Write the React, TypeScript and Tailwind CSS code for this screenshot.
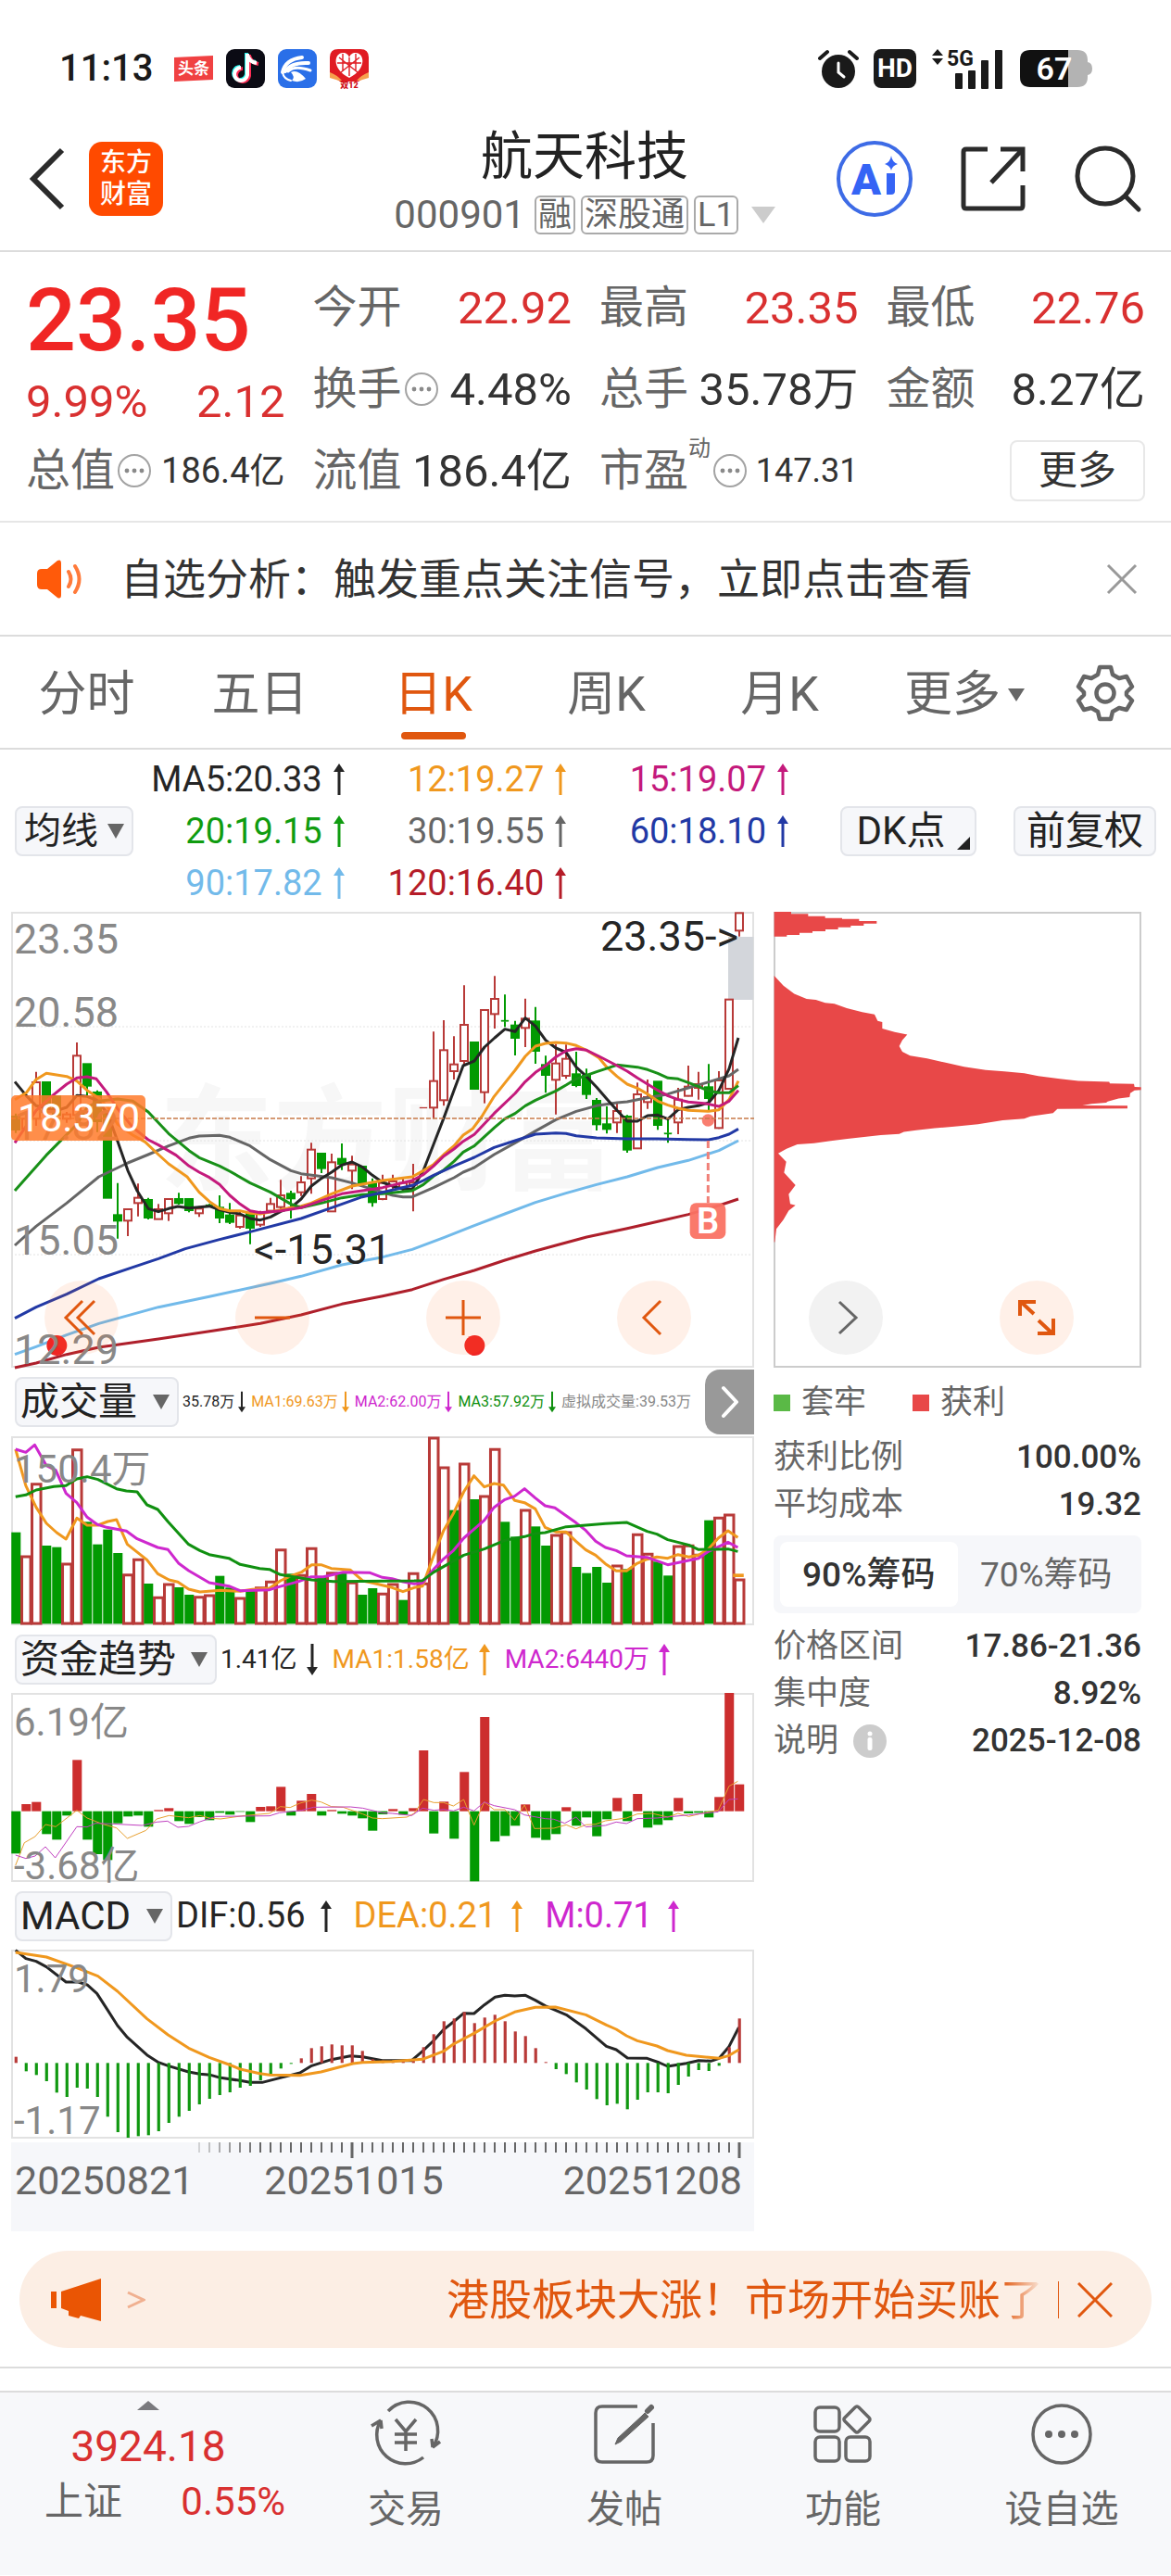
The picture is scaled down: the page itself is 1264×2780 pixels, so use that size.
import React from 'react';

type Tone = 'r' | 'g';
// [tone, high, body top, body bottom, low]
type Candle = [Tone, number, number, number, number];

const RED = '#b83a38';
const GREEN = '#029a02';

const candles: Candle[] = [
  ['g', 695, 705, 747, 758], ['r', 695, 712, 745, 755], ['r', 560, 594, 712, 735], ['g', 594, 594, 690, 690],
  ['g', 640, 640, 700, 700], ['r', 690, 698, 712, 725], ['r', 465, 508, 700, 700], ['g', 535, 535, 605, 640],
  ['g', 620, 627, 720, 755], ['g', 690, 690, 968, 968], ['g', 920, 1024, 1042, 1100], ['r', 1005, 1005, 1042, 1092],
  ['r', 922, 968, 985, 1028], ['g', 968, 975, 1032, 1038], ['r', 988, 1005, 1037, 1037], ['r', 972, 972, 1018, 1043],
  ['g', 952, 972, 985, 990], ['g', 972, 972, 1008, 1015], ['r', 995, 1003, 1018, 1030], ['g', 988, 990, 996, 998],
  ['g', 960, 1000, 1032, 1050], ['g', 985, 1025, 1046, 1053], ['r', 1010, 1025, 1062, 1068], ['g', 1010, 1018, 1065, 1118],
  ['r', 1010, 1018, 1055, 1062], ['r', 968, 988, 1010, 1015], ['r', 910, 960, 998, 1005], ['g', 945, 955, 970, 1035],
  ['r', 898, 918, 950, 962], ['r', 790, 812, 905, 955], ['g', 825, 825, 872, 888], ['r', 825, 853, 1012, 1012],
  ['g', 792, 842, 858, 878], ['r', 832, 860, 880, 940], ['g', 865, 867, 922, 930], ['g', 905, 922, 982, 997],
  ['r', 893, 920, 972, 976], ['r', 893, 915, 930, 945], ['r', 905, 920, 935, 945], ['r', 858, 918, 926, 1012],
  ['r', 675, 675, 677, 677], ['r', 430, 590, 676, 712], ['r', 393, 490, 652, 670], ['r', 445, 536, 558, 585],
  ['r', 280, 408, 525, 540], ['g', 465, 465, 615, 618], ['r', 360, 360, 626, 662], ['r', 250, 324, 373, 420],
  ['g', 310, 393, 397, 415], ['g', 395, 410, 450, 507], ['r', 323, 388, 418, 480], ['g', 350, 397, 492, 534],
  ['g', 508, 538, 570, 628], ['r', 470, 533, 586, 698], ['r', 472, 518, 573, 583], ['g', 495, 568, 603, 610],
  ['g', 550, 573, 632, 648], ['g', 645, 654, 730, 750], ['g', 672, 730, 745, 760], ['r', 663, 687, 724, 758],
  ['g', 700, 705, 812, 822], ['r', 595, 633, 808, 808], ['r', 585, 642, 658, 680], ['g', 592, 592, 732, 748],
  ['g', 712, 758, 762, 790], ['r', 612, 650, 724, 762], ['r', 540, 608, 638, 640], ['r', 560, 600, 612, 650],
  ['g', 535, 610, 645, 690], ['r', 558, 588, 742, 745], ['r', 326, 326, 615, 615], ['r', 46, 46, 103, 122],
];

const maLines = [
  { color: '#666666', points: '48,1122 117,1060 216,985 320,900 414,855 480,828 546,800 612,775 645,768 711,766 744,772 810,800 876,845 942,880 975,890 1074,903 1140,920 1206,940 1272,960 1305,965 1335,965 1404,935 1470,903 1500,885 1536,870 1600,828 1668,790 1734,752 1800,715 1866,688 1932,670 1998,660 2031,657 2064,650 2130,638 2163,632 2229,612 2295,593 2361,573 2391,552' },
  { color: '#252525', points: '48,592 85,637 117,670 183,686 216,675 249,637 282,640 320,655 350,700 381,785 414,880 444,945 480,1003 513,1013 546,1003 576,996 612,1001 678,995 711,1007 744,1015 777,1020 810,1035 843,1040 876,1030 909,1012 942,1000 975,972 1008,930 1041,905 1074,885 1107,862 1140,852 1173,868 1206,895 1239,918 1272,930 1305,940 1335,940 1371,880 1404,795 1437,710 1470,620 1500,540 1536,525 1569,480 1602,450 1635,422 1668,430 1701,386 1734,412 1767,458 1800,483 1833,497 1866,545 1899,575 1932,610 1965,648 1998,685 2031,720 2064,720 2097,702 2130,700 2163,713 2196,683 2229,675 2262,670 2295,660 2328,620 2361,550 2391,450' },
  { color: '#f0981e', points: '48,650 85,628 117,585 150,565 216,575 249,590 282,620 320,645 350,675 381,730 430,765 470,787 513,828 546,858 606,900 645,950 678,980 711,1003 744,1010 777,1010 810,1018 843,1020 909,1007 942,1000 975,995 1008,985 1074,955 1140,930 1239,912 1335,900 1371,880 1404,860 1437,828 1470,800 1500,765 1530,745 1560,705 1600,640 1640,590 1668,555 1701,510 1734,477 1767,468 1800,465 1833,467 1866,475 1899,490 1940,515 1965,545 1998,575 2031,600 2064,613 2097,632 2130,655 2163,668 2196,678 2229,685 2295,688 2328,683 2361,650 2391,590' },
  { color: '#189018', points: '48,945 150,830 249,730 282,675 320,655 381,648 430,655 480,690 546,760 612,815 645,838 711,865 744,882 810,920 876,950 942,988 975,1000 1041,985 1107,968 1173,958 1239,955 1335,945 1371,925 1404,898 1437,878 1470,850 1500,820 1536,800 1569,770 1602,740 1635,712 1668,695 1701,670 1734,652 1767,637 1800,622 1833,603 1866,583 1932,560 1998,538 2064,545 2097,553 2130,565 2163,580 2196,583 2229,595 2262,608 2295,622 2328,628 2361,628 2391,605' },
  { color: '#c41a7c', points: '48,790 85,735 117,685 170,637 216,600 249,580 282,576 312,583 345,625 381,680 430,740 480,780 513,797 570,830 612,865 645,885 678,902 711,925 744,960 777,988 810,1010 843,1016 909,1010 975,1000 1041,977 1107,955 1173,945 1239,935 1335,912 1371,893 1404,865 1437,833 1470,810 1500,785 1536,763 1600,695 1668,630 1701,592 1734,562 1767,540 1800,512 1833,492 1866,485 1899,490 1940,510 1998,540 2031,558 2064,580 2097,600 2130,620 2163,638 2196,650 2229,658 2280,662 2328,672 2361,655 2391,620' },
  { color: '#2239a5', points: '48,1358 117,1322 216,1280 320,1230 430,1193 513,1165 600,1133 711,1103 810,1078 975,1035 1074,1000 1173,965 1239,950 1335,928 1371,912 1404,895 1437,880 1470,865 1536,837 1600,805 1668,783 1734,762 1800,758 1833,760 1866,767 1932,774 2031,777 2130,777 2229,779 2295,780 2328,773 2361,762 2391,745' },
  { color: '#72baea', points: '48,1475 117,1450 216,1412 320,1375 513,1322 678,1288 876,1245 975,1222 1107,1185 1239,1160 1335,1135 1437,1097 1536,1058 1635,1020 1734,983 1833,953 1932,925 2031,900 2130,870 2229,847 2328,815 2391,783' },
  { color: '#ae1f2b', points: '48,1518 117,1503 216,1475 320,1452 513,1425 678,1400 843,1375 975,1347 1107,1312 1239,1286 1335,1265 1437,1232 1536,1203 1635,1170 1734,1140 1800,1122 1900,1095 2031,1067 2130,1045 2229,1022 2328,993 2391,972' },
];

const volumeBars =
  'g521 r597 r362 g564 g569 r621 r251 g487 g560 g512 g588 r656 r607 g687 r730 r687 g699 g723 r728 r723 g662 g700 r732 g710 r698 r679 r575 g655 r658 r571 g663 r650 g650 r682 g723 g702 r718 r687 g740 r652 r685 r213 r309 g449 r297 g414 r402 r250 g487 g535 r447 g502 g564 r528 r519 g633 g653 g633 g684 r627 g640 r526 r589 g616 g661 r564 r562 r592 g482 r472 r462 r672';

const volumeLines = [
  { color: '#f0981e', points: '32,252 53,370 74,440 95,492 116,522 135,543 157,475 178,498 200,498 220,486 238,480 260,560 300,610 322,655 345,675 363,682 385,705 408,714 450,709 490,712 515,706 550,702 572,678 594,662 615,650 636,626 655,626 676,638 715,643 740,678 760,685 800,700 822,713 845,700 862,695 885,595 905,515 925,460 946,390 967,338 988,374 1008,363 1027,368 1050,418 1070,425 1092,445 1112,505 1135,520 1155,520 1175,550 1195,578 1215,595 1235,623 1257,646 1278,646 1298,623 1320,608 1340,601 1362,605 1383,593 1405,601 1425,595 1445,575 1465,540 1485,516 1505,538' },
  { color: '#ce28ce', points: '32,252 53,262 71,238 95,305 114,320 135,395 157,425 178,472 198,495 218,505 258,517 280,542 322,570 343,577 365,622 385,645 427,684 467,695 490,710 550,707 570,697 610,680 635,665 660,665 700,650 755,652 780,667 800,671 820,680 845,688 862,685 885,640 905,607 925,580 946,540 988,482 1008,440 1030,415 1050,404 1070,380 1092,410 1112,435 1132,442 1175,490 1195,515 1215,550 1235,570 1257,580 1278,597 1320,602 1362,626 1425,605 1445,583 1465,568 1485,553 1505,570' },
  { color: '#109010', points: '32,406 53,400 74,384 110,373 135,370 157,348 178,341 200,350 238,380 258,387 280,390 300,432 322,447 343,487 385,560 408,580 427,593 467,605 490,625 530,638 550,641 572,658 594,664 636,675 680,680 845,678 862,677 885,650 946,595 988,575 1030,547 1070,535 1092,525 1112,522 1155,503 1195,498 1235,493 1278,489 1320,518 1340,527 1362,545 1405,562 1425,577 1485,575 1505,583' },
];

const fundBars =
  'g720 r560 r553 g657 g675 g597 r417 g675 g722 g741 g622 g600 g597 g633 r579 r573 g615 g624 g602 g612 g588 g594 g585 g618 r569 r567 r504 g597 r549 r527 g597 r579 g591 g597 g606 g646 g593 r576 g594 r573 r386 g655 r552 g672 r456 g810 r278 g681 g663 g630 r561 g669 g676 g657 r570 g630 g603 g664 g609 r540 g615 r527 g636 g627 g612 r540 g590 g588 g603 r537 r200 r496';

const fundLines = [
  { color: '#e8a030', points: '32,758 50,685 72,665 93,626 114,633 157,580 178,605 210,625 238,637 260,671 298,645 320,608 345,597 385,604 408,597 430,606 450,608 500,597 550,590 572,568 592,571 612,557 636,547 655,553 676,568 700,570 740,592 760,605 780,607 830,602 845,590 864,545 885,555 905,555 925,566 946,545 967,628 988,553 1008,578 1030,578 1050,612 1070,563 1090,639 1130,638 1155,627 1175,640 1195,627 1215,625 1235,614 1278,605 1300,592 1330,590 1362,602 1383,590 1405,600 1445,585 1465,580 1487,502 1505,486' },
  { color: '#c040c0', points: '32,725 53,736 72,728 93,698 113,734 157,633 178,634 195,622 230,624 290,629 320,618 342,615 363,635 385,632 408,617 440,600 550,598 570,588 615,580 640,570 715,569 740,573 780,588 800,590 840,597 862,573 885,580 905,577 925,582 946,570 967,582 988,553 1008,565 1050,578 1070,595 1112,607 1130,609 1152,622 1175,602 1195,634 1235,629 1257,618 1278,623 1300,607 1340,605 1405,595 1465,585 1487,545 1505,543' },
];

const macdBars =
  'r538 g585 g597 g617 g654 g668 g638 g641 g668 g732 g782 g800 g795 g792 g779 g752 g732 g713 g692 g674 g662 g653 g638 g632 g614 g595 g576 g561 r543 r510 r504 r498 r501 r501 r519 r546 r550 r553 r553 r548 r507 r465 r423 r414 r393 r429 r411 r402 r423 r456 r471 r510 r555 g578 g594 g621 g644 g675 g695 g690 g708 g677 g653 g653 g656 g629 g602 g581 g584 g567 r507 r414';

const macdLines = [
  { color: '#252525', points: '32,193 53,220 74,229 95,247 135,296 160,296 178,305 198,333 220,387 240,437 260,475 300,532 322,555 343,567 385,587 408,594 430,597 450,606 490,615 510,621 535,621 572,606 612,590 636,567 676,547 715,535 740,538 780,550 840,550 862,520 885,485 905,450 925,425 946,397 967,398 988,370 1010,345 1030,339 1050,341 1072,339 1092,355 1112,373 1155,402 1195,447 1237,504 1257,515 1280,542 1320,543 1345,557 1362,569 1400,559 1425,550 1450,552 1467,543 1487,505 1507,443' },
  { color: '#f0981e', points: '32,200 95,215 157,250 200,277 240,326 300,415 343,467 385,510 427,540 467,563 490,578 530,592 550,597 612,598 655,587 720,560 740,556 800,553 862,546 905,520 925,497 967,462 1010,422 1050,393 1092,378 1133,377 1195,402 1237,435 1257,449 1278,470 1300,486 1340,503 1362,518 1400,533 1425,537 1467,543 1487,534 1507,515' },
];

const parseBars = (text: string) =>
  text.split(' ').map((item, i) => ({ up: item[0] === 'r', y: Number(item.slice(1)), x: 33 + 20.78 * i }));

const averages = [
  { label: 'MA5:20.33', tone: 'text-[#252525]' },
  { label: '12:19.27', tone: 'text-[#f0981e]' },
  { label: '15:19.07', tone: 'text-[#c41a7c]' },
  { label: '20:19.15', tone: 'text-[#109c10]' },
  { label: '30:19.55', tone: 'text-[#666666]' },
  { label: '60:18.10', tone: 'text-[#2239a5]' },
  { label: '90:17.82', tone: 'text-[#72baea]' },
  { label: '120:16.40', tone: 'text-[#b51c28]' },
];

const ArrowIcon = ({ down = false, small = false }: { down?: boolean; small?: boolean }) => (
  <svg viewBox="0 0 12 36" className={`${small ? 'h-6 w-2' : 'h-9 w-3'} shrink-0 ${down ? 'rotate-180' : ''}`} aria-hidden="true">
    <path d="M6 1 L12 10 H0 Z" fill="currentColor" />
    <path d="M6 8 V35" stroke="currentColor" strokeWidth="3" />
  </svg>
);

const MoreDots = () => (
  <svg viewBox="0 0 38 38" className="ml-[2px] size-[38px] shrink-0" aria-hidden="true">
    <circle cx="19" cy="19" r="17" fill="none" stroke="#a3a3a3" strokeWidth="2" />
    <g fill="#8a8a8a">
      <circle cx="11" cy="19" r="2.4" />
      <circle cx="19" cy="19" r="2.4" />
      <circle cx="27" cy="19" r="2.4" />
    </g>
  </svg>
);

const Lines = ({ lines, width }: { lines: { color: string; points: string }[]; width: number }) => (
  <>
    {lines.map((line) => (
      <polyline
        key={line.color}
        points={line.points}
        fill="none"
        stroke={line.color}
        strokeWidth={width}
        strokeLinejoin="round"
        vectorEffect="non-scaling-stroke"
      />
    ))}
  </>
);

const StatusBar = () => (
  <div className="flex h-[124px] items-center justify-between pt-6 pr-[85px] pl-16 text-[#1a1a1a]">
    <div className="flex items-center gap-3">
      <span className="mr-[10px] text-[40px] leading-none font-medium">11:13</span>
      <svg viewBox="0 0 44 44" className="size-11" aria-hidden="true">
        <path d="M1 10 L43 8 V34 L1 36 Z" fill="#f04142" />
        <text x="22" y="28" textAnchor="middle" fontSize="17" fontWeight="700" fill="#fff">头条</text>
      </svg>
      <svg viewBox="0 0 44 44" className="size-11" aria-hidden="true">
        <rect x="1" y="1" width="42" height="42" rx="9" fill="#0b0b14" />
        <g fill="none" strokeWidth="4">
          <path d="M24 6 V29 A7 7 0 1 1 17 21 M24 7 Q26 15 34 16" stroke="#25f4ee" transform="translate(-1 -1)" />
          <path d="M24 6 V29 A7 7 0 1 1 17 21 M24 7 Q26 15 34 16" stroke="#fe2c55" transform="translate(2 1)" />
          <path d="M24 6 V29 A7 7 0 1 1 17 21 M24 7 Q26 15 34 16" stroke="#fff" />
        </g>
      </svg>
      <svg viewBox="0 0 44 44" className="size-11" aria-hidden="true">
        <rect x="1" y="1" width="42" height="42" rx="9" fill="#2a6fe8" />
        <g fill="none" stroke="#fff" strokeLinecap="round">
          <path d="M6 26 Q9 12 27 10" strokeWidth="4" />
          <path d="M9 25 Q15 15 34 16" strokeWidth="4" />
          <path d="M12 25 Q19 18 36 24" strokeWidth="3" />
          <path d="M6 26 Q7 33 15 35" strokeWidth="2" />
        </g>
        <path d="M15 26 Q22 22 31 33 Q24 38 16 35 Q20 31 15 26 Z" fill="#fff" />
      </svg>
      <svg viewBox="0 0 44 44" className="size-11" aria-hidden="true">
        <path d="M10 1 H34 Q43 1 43 10 V28 L32 36 H12 L1 28 V10 Q1 1 10 1 Z" fill="#e01b22" />
        <path d="M1 26 Q9 29 14 35 H30 Q35 29 43 26 V32 L33 35 H11 L1 32 Z" fill="#f6a04d" />
        <path d="M22 32 C2 22 6 5 15 5 C19 5 21 7 22 10 C23 7 25 5 29 5 C38 5 42 22 22 32 Z" fill="#fff" />
        <path d="M11 10 L31 26 M33 10 L13 26 M22 10 V30 M9 16 H35 M15 6 V24 M29 6 V24" stroke="#e01b22" strokeWidth="1.4" />
        <text x="22" y="43" textAnchor="middle" fontSize="9" fontWeight="900" fill="#d01018">双12</text>
      </svg>
    </div>
    <div className="flex items-center gap-4">
      <svg viewBox="0 0 44 44" className="size-11" aria-hidden="true">
        <circle cx="22" cy="25" r="18" fill="#1a1a1a" />
        <path d="M2 11 L10 4 M42 11 L34 4" stroke="#1a1a1a" strokeWidth="4" strokeLinecap="round" />
        <path d="M22 16 V26 L28 31" fill="none" stroke="#fff" strokeWidth="3" strokeLinecap="round" />
      </svg>
      <span className="flex h-[42px] w-[46px] items-center justify-center rounded-lg bg-[#1a1a1a] text-[28px] leading-none font-bold text-white">HD</span>
      <svg viewBox="0 0 80 46" className="h-[46px] w-20" aria-hidden="true">
        <path d="M7 2 L13 9 H1 Z M7 19 L13 12 H1 Z" fill="#1a1a1a" />
        <text x="17" y="20" fontSize="23" fontWeight="700" fill="#1a1a1a">5G</text>
        <g fill="#1a1a1a">
          <rect x="26" y="28" width="8" height="17" rx="1" />
          <rect x="40" y="25" width="8" height="20" rx="1" />
          <rect x="54" y="14" width="8" height="31" rx="1" />
          <rect x="69" y="3" width="8" height="42" rx="1" />
        </g>
      </svg>
      <svg viewBox="0 0 78 42" className="h-[42px] w-[78px]" aria-hidden="true">
        <path d="M10 1 H62 Q73 1 73 12 V14 Q78 15 78 21 Q78 27 73 28 V30 Q73 41 62 41 H10 Z" fill="#b3b3b3" />
        <path d="M11 1 H52 V41 H11 Q0 41 0 30 V12 Q0 1 11 1 Z" fill="#111" />
        <text x="37" y="33" textAnchor="middle" fontSize="34" fontWeight="600" fill="#fff">67</text>
      </svg>
    </div>
  </div>
);

const Header = () => (
  <header className="grid h-[148px] grid-cols-[1fr_auto_1fr] items-center border-b-2 border-[#dcdcdc] pr-[30px] pb-2 pl-7">
    <div className="flex items-center gap-6">
      <button type="button" aria-label="返回">
        <svg viewBox="0 0 44 72" className="h-[72px] w-11" fill="none" stroke="#2b2b2b" strokeWidth="6">
          <path d="M39 5 L8 36 L39 67" />
        </svg>
      </button>
      <div className="flex size-20 flex-col items-center justify-center rounded-[14px] bg-[#ff4a00] text-[28px] leading-[34px] font-medium text-white">
        <span>东方</span>
        <span>财富</span>
      </div>
    </div>
    <div className="flex flex-col items-center gap-[10px] pt-1">
      <h1 className="text-[56px] leading-[64px] text-[#222]">航天科技</h1>
      <button type="button" className="flex items-center gap-[6px] text-[#666]">
        <span className="mr-1 text-[42px] leading-[42px]">000901</span>
        <span className="rounded-md border-2 border-[#aaa] px-[2px] text-[36px] leading-[38px]">融</span>
        <span className="rounded-md border-2 border-[#aaa] px-[2px] text-[36px] leading-[38px]">深股通</span>
        <span className="rounded-md border-2 border-[#aaa] px-[2px] text-[36px] leading-[38px]">L1</span>
        <svg viewBox="0 0 26 18" className="ml-2 h-[18px] w-[26px]" aria-hidden="true">
          <path d="M0 0 H26 L13 18 Z" fill="#ccc" />
        </svg>
      </button>
    </div>
    <div className="flex items-center justify-end gap-12">
      <button type="button" aria-label="AI 助手">
        <svg viewBox="0 0 84 84" className="size-[84px]">
          <circle cx="42" cy="42" r="39" fill="none" stroke="#3d6be6" strokeWidth="4" />
          <text x="17" y="59" fontSize="47" fontWeight="900" fill="#3564f5">A</text>
          <path d="M55 36 H64 V55 Q64 59 60 59 H55 Z" fill="#3564f5" />
          <path d="M60 17 Q61 24 67 26 Q61 28 60 33 Q59 28 53 26 Q59 24 60 17 Z" fill="#3564f5" />
        </svg>
      </button>
      <button type="button" aria-label="分享">
        <svg viewBox="0 0 76 76" className="size-[76px]" fill="none" stroke="#2b2b2b" strokeWidth="5">
          <path d="M32 6 H9 Q6 6 6 9 V67 Q6 70 9 70 H67 Q70 70 70 67 V45" />
          <path d="M46 6 H70 V30 M70 6 L36 42" />
        </svg>
      </button>
      <button type="button" aria-label="搜索">
        <svg viewBox="0 0 76 76" className="size-[76px]" fill="none" stroke="#2b2b2b" strokeWidth="5">
          <circle cx="35" cy="35" r="30" />
          <path d="M57 57 L71 71" strokeLinecap="round" />
        </svg>
      </button>
    </div>
  </header>
);

interface StatProps {
  label: string;
  value: string;
  tone?: string;
  dots?: boolean;
  note?: string;
  size?: string;
}

const Stat: React.FC<StatProps> = ({ label, value, tone = 'text-[#333]', dots, note, size = 'text-[49px]' }) => (
  <div className="flex items-center justify-between whitespace-nowrap">
    <span className="flex items-center text-[48px] text-[#666]">
      {label}
      {note && <sup className="self-start text-[24px] leading-none">{note}</sup>}
      {dots && <MoreDots />}
    </span>
    <span className={`${size} ${tone}`}>{value}</span>
  </div>
);

const Quote = () => (
  <section className="grid auto-rows-[88px] grid-cols-4 gap-x-[30px] border-b-2 border-[#e6e6e6] px-7 pt-4 pb-[10px] leading-none">
    <div className="row-span-2 flex flex-col justify-between pt-[14px] pb-[6px]">
      <strong className="text-[95px] leading-[88px] font-medium text-[#f02624]">23.35</strong>
      <div className="flex justify-between text-[49px] text-[#d93030]">
        <span>9.99%</span>
        <span>2.12</span>
      </div>
    </div>
    <Stat label="今开" value="22.92" tone="text-[#d93030]" />
    <Stat label="最高" value="23.35" tone="text-[#d93030]" />
    <Stat label="最低" value="22.76" tone="text-[#d93030]" />
    <Stat label="换手" value="4.48%" dots />
    <Stat label="总手" value="35.78万" />
    <Stat label="金额" value="8.27亿" />
    <Stat label="总值" value="186.4亿" dots size="text-[38px]" />
    <Stat label="流值" value="186.4亿" />
    <Stat label="市盈" note="动" value="147.31" dots size="text-[36px]" />
    <div className="flex items-center justify-end">
      <button type="button" className="h-[66px] w-[146px] rounded-lg border-2 border-[#e8e8e8] text-[42px] text-[#333]">更多</button>
    </div>
  </section>
);

const Notice = () => (
  <section className="flex h-[123px] items-center border-b-2 border-[#dcdcdc] px-9">
    <svg viewBox="0 0 54 44" className="h-11 w-[54px] shrink-0" aria-hidden="true">
      <path d="M9 11 H15 L26 2 Q30 0 30 5 V39 Q30 44 26 42 L15 33 H9 Q4 33 4 28 V16 Q4 11 9 11 Z" fill="#ff5a0a" />
      <path d="M38 14 Q43 22 38 30 M45 8 Q54 22 45 36" fill="none" stroke="#ff7a3a" strokeWidth="4" strokeLinecap="round" />
    </svg>
    <p className="ml-10 flex-1 text-[46px] leading-none whitespace-nowrap text-[#333]">自选分析：触发重点关注信号，立即点击查看</p>
    <button type="button" aria-label="关闭提醒">
      <svg viewBox="0 0 34 34" className="size-[34px]" stroke="#999" strokeWidth="3">
        <path d="M2 2 L32 32 M32 2 L2 32" />
      </svg>
    </button>
  </section>
);

const Tabs = () => (
  <nav className="grid h-[122px] grid-cols-[repeat(6,1fr)_142px] border-b-2 border-[#dcdcdc] pt-[6px] text-[52px] leading-none text-[#666]">
    <button type="button">分时</button>
    <button type="button">五日</button>
    <button type="button" className="relative text-[#e0570f]">
      日K
      <span className="absolute bottom-[9px] left-1/2 h-2 w-[70px] -translate-x-1/2 rounded-full bg-[#e0570f]" />
    </button>
    <button type="button">周K</button>
    <button type="button">月K</button>
    <button type="button" className="flex items-center justify-end gap-2 pr-4">
      更多
      <svg viewBox="0 0 18 14" className="h-[14px] w-[18px]" aria-hidden="true">
        <path d="M0 0 H18 L9 14 Z" fill="#666" />
      </svg>
    </button>
    <button type="button" aria-label="设置" className="flex items-center justify-center pb-1">
      <svg viewBox="0 0 64 64" className="size-16" fill="none" stroke="#666" strokeWidth="4.5" strokeLinejoin="round">
        <path d="M26 4 H38 L40 12 L47 16 L55 14 L61 25 L55 31 V34 L61 40 L55 50 L47 48 L40 52 L38 60 H26 L24 52 L17 48 L9 50 L3 40 L9 34 V31 L3 25 L9 14 L17 16 L24 12 Z" />
        <circle cx="32" cy="32" r="9.5" />
      </svg>
    </button>
  </nav>
);

interface PickerProps {
  label: string;
  value: string;
  className: string;
}

const Picker: React.FC<PickerProps> = ({ label, value, className }) => (
  <div className="relative shrink-0">
    <select aria-label={label} className={`block h-[54px] appearance-none rounded-lg border-2 border-[#e3e5ea] bg-[#f6f7fa] leading-none text-[#222] ${className}`}>
      <option>{value}</option>
    </select>
    <svg viewBox="0 0 18 16" className="pointer-events-none absolute top-[19px] right-[10px] h-4 w-[18px]" aria-hidden="true">
      <path d="M0 0 H18 L9 16 Z" fill="#666" />
    </svg>
  </div>
);

const Averages = () => (
  <section className="flex h-[175px] items-center px-4">
    <Picker label="主图指标" value="均线" className="w-[128px] pl-2 text-[40px]" />
    <ul className="mr-[56px] grid flex-1 grid-cols-[19fr_20fr_20fr] text-[38px] leading-[56px]">
      {averages.map((item) => (
        <li key={item.label} className={`flex items-center justify-end gap-3 ${item.tone}`}>
          {item.label}
          <ArrowIcon />
        </li>
      ))}
    </ul>
    <button type="button" className="relative mr-10 h-[54px] w-[147px] rounded-lg border-2 border-[#e3e5ea] bg-[#f6f7fa] pr-4 text-[42px] leading-none text-[#222]">
      DK点
      <svg viewBox="0 0 14 14" className="absolute right-[5px] bottom-[5px] size-[14px]" aria-hidden="true">
        <path d="M14 0 V14 H0 Z" fill="#222" />
      </svg>
    </button>
    <button type="button" className="h-[54px] w-[154px] rounded-lg border-2 border-[#e3e5ea] bg-[#f6f7fa] text-[42px] leading-none text-[#222]">前复权</button>
  </section>
);

const roundButton = 'flex size-20 items-center justify-center rounded-full bg-[#ff6a1a]/10';

const PriceChart = () => (
  <div className="relative">
    <svg viewBox="0 0 802 492" className="block w-full overflow-visible">
      <rect x="1" y="1" width="800" height="490" fill="#fff" stroke="#e2e2e2" strokeWidth="2" />
      <text x="160" y="290" fontSize="123" fontWeight="700" fill="#f7f7f7">东方财富</text>
      <g stroke="#e2e2e2" strokeDasharray="2 2">
        <path d="M0 124 H802" />
        <path d="M0 247 H802" />
        <path d="M0 370 H802" />
      </g>
      <g transform="scale(0.33333) translate(-36 -42)">
        <rect x="2358" y="123" width="82" height="204" fill="#d3d6db" />
        {candles.map(([tone, high, top, bottom, low], i) => {
          const x = 51 + 33 * i;
          const color = tone === 'r' ? RED : GREEN;
          const tall = bottom - top > 6;
          return (
            <g key={i}>
              <path d={`M${x} ${high} V${top} M${x} ${bottom} V${low}`} stroke={color} strokeWidth="6" />
              <rect
                x={x - 12}
                y={top}
                width="24"
                height={Math.max(bottom - top, 3)}
                fill={tall && tone === 'r' ? '#fff' : color}
                stroke={color}
                strokeWidth={tall ? 6 : 1}
              />
            </g>
          );
        })}
        <Lines lines={maLines} width={3} />
        <circle cx="2293" cy="717" r="20" fill="#f87060" opacity="0.9" />
        <path d="M2293 783 V985" stroke="#f08078" strokeWidth="9" strokeDasharray="24 12" />
        <rect x="2234" y="985" width="116" height="116" rx="20" fill="#fa7263" opacity="0.95" />
        <circle cx="184" cy="1446" r="33" fill="#f02624" />
        <circle cx="1537" cy="1446" r="33" fill="#f02624" />
      </g>
      <text x="752" y="347" textAnchor="middle" fontSize="38" fontWeight="600" fill="#fff">B</text>
      <path d="M0 223 H802" stroke="#c87a48" strokeWidth="1.5" strokeDasharray="5 2" />
      <g fontSize="45" fill="#888">
        <text x="3" y="45">23.35</text>
        <text x="3" y="124">20.58</text>
        <text x="3" y="246">17.82</text>
        <text x="3" y="370">15.05</text>
        <text x="3" y="488">12.29</text>
      </g>
      <g fontSize="45" fill="#252525">
        <text x="785" y="42" textAnchor="end">23.35-&gt;</text>
        <text x="262" y="380">&lt;-15.31</text>
      </g>
      <rect x="0" y="198" width="145" height="49" rx="5" fill="#ff7a2a" opacity="0.85" />
      <text x="7" y="237" fontSize="43" fill="#fff">18.370</text>
    </svg>
    <div className="absolute bottom-[14px] left-9 flex gap-[126px]">
      <button type="button" aria-label="最早" className={roundButton}>
        <svg viewBox="0 0 40 40" className="size-10" fill="none" stroke="#e0570f" strokeWidth="3">
          <path d="M21 2 L3 20 L21 38 M34 2 L16 20 L34 38" />
        </svg>
      </button>
      <button type="button" aria-label="缩小" className={roundButton}>
        <svg viewBox="0 0 40 40" className="size-10" stroke="#e0570f" strokeWidth="3">
          <path d="M1 20 H39" />
        </svg>
      </button>
      <button type="button" aria-label="放大" className={roundButton}>
        <svg viewBox="0 0 40 40" className="size-10" stroke="#e0570f" strokeWidth="3">
          <path d="M1 20 H39 M20 1 V39" />
        </svg>
      </button>
      <button type="button" aria-label="向前" className={roundButton}>
        <svg viewBox="0 0 40 40" className="size-10" fill="none" stroke="#e0570f" strokeWidth="3">
          <path d="M27 2 L9 20 L27 38" />
        </svg>
      </button>
    </div>
  </div>
);

const VolumeChart = () => (
  <svg viewBox="0 0 802 204" className="block w-full overflow-visible">
    <rect x="1" y="1" width="800" height="202" fill="#fff" stroke="#e2e2e2" strokeWidth="2" />
    <g transform="scale(0.5293 0.33333) translate(-23 -210)">
      {parseBars(volumeBars).map((bar, i) => (
        <rect
          key={i}
          x={bar.up ? bar.x - 9 : bar.x - 9.5}
          y={bar.up ? bar.y + 3 : bar.y}
          width={bar.up ? 18 : 19}
          height={(bar.up ? 813 : 817) - bar.y}
          fill={bar.up ? '#fff' : GREEN}
          stroke={bar.up ? RED : 'none'}
          strokeWidth="3"
          vectorEffect="non-scaling-stroke"
        />
      ))}
      <rect x="1495" y="655" width="22" height="11" fill="#f0981e" />
      <Lines lines={volumeLines} width={3} />
    </g>
    <text x="3" y="50" fontSize="42" fill="#888">150.4万</text>
  </svg>
);

const FundChart = () => (
  <svg viewBox="0 0 802 204" className="block w-full overflow-visible">
    <rect x="1" y="1" width="800" height="202" fill="#fff" stroke="#e2e2e2" strokeWidth="2" />
    <g transform="scale(0.5293 0.33333) translate(-23 -200)">
      {parseBars(fundBars).map((bar, i) => (
        <rect
          key={i}
          x={bar.x - 9.5}
          y={Math.min(bar.y, 583)}
          width="19"
          height={Math.max(Math.abs(bar.y - 583), 2)}
          fill={bar.up ? '#cc2e2e' : GREEN}
        />
      ))}
      <Lines lines={fundLines} width={1} />
    </g>
    <g fontSize="42" fill="#888">
      <text x="3" y="46">6.19亿</text>
      <text x="3" y="201">-3.68亿</text>
    </g>
  </svg>
);

const MacdChart = () => (
  <svg viewBox="0 0 802 204" className="block w-full overflow-visible">
    <rect x="1" y="1" width="800" height="202" fill="#fff" stroke="#e2e2e2" strokeWidth="2" />
    <g transform="scale(0.5293 0.33333) translate(-23 -191)">
      <Lines lines={macdLines.slice(0, 1)} width={3} />
      {parseBars(macdBars).map((bar, i) => (
        <rect
          key={i}
          x={bar.x - 3}
          y={Math.min(bar.y, 558)}
          width="6"
          height={Math.abs(bar.y - 558)}
          fill={bar.up ? RED : '#109810'}
        />
      ))}
      <Lines lines={macdLines.slice(1)} width={3} />
    </g>
    <g fontSize="42" fill="#888">
      <text x="3" y="46">1.79</text>
      <text x="3" y="199">-1.17</text>
    </g>
  </svg>
);

const ticks = Array.from({ length: 54 }, (_, i) => i + 18);

const DateAxis = () => (
  <div className="mt-1 h-[96px] bg-[#f6f7fa]">
    <svg viewBox="0 0 802 18" className="block w-full" aria-hidden="true">
      {ticks.map((i) => {
        const major = i === 33 || i === 71;
        return (
          <path
            key={i}
            d={`M${5 + 11 * i} 0 V${major ? 17 : 11}`}
            stroke="#666"
            strokeWidth={major ? 3 : 2}
            opacity={Math.min(1, (i - 16) / 8)}
          />
        );
      })}
    </svg>
    <div className="flex pr-[13px] pl-1 text-[43px] leading-[46px] text-[#666]">
      <span>20250821</span>
      <span className="ml-[76px]">20251015</span>
      <span className="ml-auto">20251208</span>
    </div>
  </div>
);

const LeftCharts = () => (
  <div className="min-w-0 flex-1">
    <PriceChart />
    <div className="flex h-[74px] items-center pl-1 text-[16px] whitespace-nowrap">
      <Picker label="副图指标一" value="成交量" className="w-[177px] pl-1 text-[42px]" />
      <span className="ml-1 flex items-center gap-1 text-[#252525]">35.78万<ArrowIcon down small /></span>
      <span className="ml-[6px] flex items-center gap-1 text-[#f0981e]">MA1:69.63万<ArrowIcon down small /></span>
      <span className="ml-[6px] flex items-center gap-1 text-[#ce28ce]">MA2:62.00万<ArrowIcon down small /></span>
      <span className="ml-[6px] flex items-center gap-1 text-[#109010]">MA3:57.92万<ArrowIcon down small /></span>
      <span className="ml-[6px] text-[#888]">虚拟成交量:39.53万</span>
      <button type="button" aria-label="更多指标" className="ml-auto flex h-[70px] w-[53px] items-center justify-center rounded-l-2xl bg-[#999]">
        <svg viewBox="0 0 20 36" className="h-9 w-5" fill="none" stroke="#fff" strokeWidth="4" strokeLinecap="round" strokeLinejoin="round">
          <path d="M3 3 L17 18 L3 33" />
        </svg>
      </button>
    </div>
    <VolumeChart />
    <div className="flex h-[73px] items-center pl-1 text-[28px] whitespace-nowrap">
      <Picker label="副图指标二" value="资金趋势" className="w-[218px] pl-1 text-[42px]" />
      <span className="ml-1 flex items-center gap-[10px] text-[#252525]">1.41亿<ArrowIcon down /></span>
      <span className="ml-4 flex items-center gap-[10px] text-[#f0981e]">MA1:1.58亿<ArrowIcon /></span>
      <span className="ml-4 flex items-center gap-[10px] text-[#ce28ce]">MA2:6440万<ArrowIcon /></span>
    </div>
    <FundChart />
    <div className="flex h-[73px] items-center pl-1 text-[38px] whitespace-nowrap">
      <Picker label="副图指标三" value="MACD" className="w-[170px] pl-1 text-[42px]" />
      <span className="ml-1 flex items-center gap-4 text-[#252525]">DIF:0.56<ArrowIcon /></span>
      <span className="ml-6 flex items-center gap-4 text-[#f0981e]">DEA:0.21<ArrowIcon /></span>
      <span className="ml-6 flex items-center gap-4 text-[#ce28ce]">M:0.71<ArrowIcon /></span>
    </div>
    <MacdChart />
    <DateAxis />
  </div>
);

const ChipRow = ({ label, value, info = false }: { label: string; value: string; info?: boolean }) => (
  <div className="flex h-[51px] items-center justify-between">
    <dt className="flex items-center gap-4 text-[#666]">
      {label}
      {info && (
        <svg viewBox="0 0 36 36" className="size-9" aria-hidden="true">
          <circle cx="18" cy="18" r="18" fill="#ccc" />
          <circle cx="18" cy="10" r="2.5" fill="#fff" />
          <rect x="15.5" y="14" width="5" height="14" rx="2" fill="#fff" />
        </svg>
      )}
    </dt>
    <dd className="font-medium text-[#333]">{value}</dd>
  </div>
);

const ChipPanel = () => (
  <aside className="w-[397px] shrink-0 text-[35px] leading-none whitespace-nowrap">
    <div className="relative">
      <svg viewBox="0 0 397 492" className="block w-full" aria-hidden="true">
        <rect x="1" y="1" width="395" height="490" fill="#fff" stroke="#ccc" strokeWidth="2" />
        <g transform="scale(0.33333 0.35714) translate(-73 -42)" fill="#e84848">
          <path d="M75 42 L130 42 V48 H185 V55 H240 V61 H295 V64 H350 V70 H407 V78 H365 V84 H323 V89 H282 V95 H241 V101 H199 V106 H157 V112 H116 V117 H75 Z" />
          <path d="M75 235 L105 265 L140 290 L180 305 L210 308 L240 317 L270 320 L310 333 L360 345 L400 352 L410 372 L425 375 V395 L465 405 L506 413 L490 430 L480 448 L490 465 L515 477 L570 485 L630 498 L690 510 L760 520 L820 524 L885 530 L930 538 L1000 547 L1060 553 L1160 556 L1162 561 L1240 562 L1242 571 L1263 572 V580 L1242 582 L1228 590 L1226 602 L1190 606 L1155 615 L1150 619 L1103 622 L1073 627 L1219 628 V636 L992 638 L978 650 L905 660 L885 667 L815 672 L735 684 L667 690 L595 696 L535 702 L495 707 L480 713 L420 717 L312 728 L258 734 L204 741 L150 745 L115 758 L88 772 L114 797 L107 830 L144 868 L122 895 L127 925 L144 929 L122 945 L105 972 L82 1000 L77 1040 H75 Z" />
        </g>
      </svg>
      <div className="absolute bottom-[14px] left-[38px] flex gap-[126px]">
        <button type="button" aria-label="收起" className="flex size-20 items-center justify-center rounded-full bg-[#f2f2f2]">
          <svg viewBox="0 0 40 40" className="size-10" fill="none" stroke="#666" strokeWidth="3">
            <path d="M13 3 L31 20 L13 37" />
          </svg>
        </button>
        <button type="button" aria-label="全屏" className={roundButton}>
          <svg viewBox="0 0 40 40" className="size-10" fill="none" stroke="#e0570f" strokeWidth="4">
            <path d="M2 18 V3 H19 M3 3 L17 16 M22 23 L37 37 M38 21 V37 H21" />
          </svg>
        </button>
      </div>
    </div>
    <div className="flex h-[71px] items-center pt-1 text-[#666]">
      <span className="size-[18px] bg-[#5ab946]" />
      <span className="ml-3">套牢</span>
      <span className="ml-[50px] size-[18px] bg-[#e84848]" />
      <span className="ml-3">获利</span>
    </div>
    <dl className="pb-2">
      <ChipRow label="获利比例" value="100.00%" />
      <ChipRow label="平均成本" value="19.32" />
    </dl>
    <div className="flex h-[84px] rounded-lg bg-[#f6f7fa] p-[7px] text-[37px]">
      <button type="button" className="flex-1 rounded-lg bg-white font-medium text-[#333]">90%筹码</button>
      <button type="button" className="flex-1 text-[#666]">70%筹码</button>
    </div>
    <dl className="pt-[10px]">
      <ChipRow label="价格区间" value="17.86-21.36" />
      <ChipRow label="集中度" value="8.92%" />
      <ChipRow label="说明" value="2025-12-08" info />
    </dl>
  </aside>
);

const Banner = () => (
  <section className="mx-[21px] mt-[21px] flex h-[105px] items-center rounded-full bg-[#fceee4] px-[34px] text-[#e0570f]">
    <svg viewBox="0 0 54 46" className="h-[46px] w-[54px] shrink-0" aria-hidden="true">
      <path d="M0 14 H6 V32 H0 Z M11 14 L54 0 V46 L32 40 L30 43 L19 40 V35 L11 32 Z" fill="#ea5504" />
    </svg>
    <svg viewBox="0 0 20 20" className="ml-7 size-5 shrink-0" fill="none" stroke="#f0b090" strokeWidth="3" aria-hidden="true">
      <path d="M1 2 L18 10 L1 18" />
    </svg>
    <a href="#news" className="ml-auto text-[46px] leading-[64px] whitespace-nowrap [mask-image:linear-gradient(to_right,#000_93%,transparent)]">
      港股板块大涨！市场开始买账了
    </a>
    <span className="mr-5 ml-4 h-10 w-px bg-[#e0570f]" />
    <button type="button" aria-label="关闭快讯" className="mr-2">
      <svg viewBox="0 0 38 38" className="size-[38px]" stroke="#e0570f" strokeWidth="3">
        <path d="M1 1 L37 37 M37 1 L1 37" />
      </svg>
    </button>
  </section>
);

const navIcon = 'size-[68px] overflow-visible';

const navItems = [
  {
    label: '交易',
    icon: (
      <svg viewBox="0 0 68 68" className={navIcon} fill="none" stroke="#666" strokeWidth="3.5">
        <path d="M15 9 A31 31 0 0 1 63 48 L71 42 M63 48 L62 39" />
        <path d="M53 59 A31 31 0 0 1 7 19 L-3 25 M7 19 L8 28" />
        <path d="M23 18 L34 31 L45 18 M34 31 V52 M22 34 H46 M22 43 H46" />
      </svg>
    ),
  },
  {
    label: '发帖',
    icon: (
      <svg viewBox="0 0 68 68" className={navIcon} fill="none" stroke="#666" strokeWidth="3.5">
        <path d="M48 4 H10 Q3 4 3 11 V57 Q3 64 10 64 H58 Q65 64 65 57 V22" />
        <path d="M52 15 L56 11 L60 15 L30 42 L24 45 L27 38 Z" fill="#666" strokeWidth="1" />
        <path d="M59 9 L63 5" strokeWidth="6" strokeLinecap="round" />
      </svg>
    ),
  },
  {
    label: '功能',
    icon: (
      <svg viewBox="0 0 68 68" className={navIcon} fill="none" stroke="#666" strokeWidth="3.5">
        <rect x="4" y="5" width="26" height="26" rx="5" />
        <rect x="4" y="37" width="26" height="26" rx="5" />
        <rect x="37" y="37" width="26" height="26" rx="5" />
        <path d="M47 5 Q49 3 51 5 L62 16 Q64 18 62 20 L51 31 Q49 33 47 31 L36 20 Q34 18 36 16 Z" />
      </svg>
    ),
  },
  {
    label: '设自选',
    icon: (
      <svg viewBox="0 0 68 68" className={navIcon}>
        <circle cx="34" cy="34" r="31" fill="none" stroke="#666" strokeWidth="3.5" />
        <g fill="#666">
          <circle cx="20" cy="34" r="4" />
          <circle cx="34" cy="34" r="4" />
          <circle cx="48" cy="34" r="4" />
        </g>
      </svg>
    ),
  },
];

const BottomNav = () => (
  <nav className="flex h-[199px] border-t-2 border-[#dcdcdc] bg-[#f7f8fa] text-[#666]">
    <button type="button" className="flex w-80 flex-col items-center pt-[9px] leading-none">
      <svg viewBox="0 0 24 10" className="h-[10px] w-6" aria-hidden="true">
        <path d="M12 0 L24 10 H0 Z" fill="#7a7a7e" />
      </svg>
      <span className="mt-3 text-[46px] leading-[54px] text-[#d93030]">3924.18</span>
      <span className="mt-[6px] mr-3 flex w-[260px] justify-between self-end text-[42px] leading-[54px]">
        上证
        <span className="text-[#d93030]">0.55%</span>
      </span>
    </button>
    {navItems.map((item) => (
      <button key={item.label} type="button" className="flex flex-1 flex-col items-center justify-start pt-[11px]">
        {item.icon}
        <span className="mt-[23px] text-[41px] leading-[48px]">{item.label}</span>
      </button>
    ))}
  </nav>
);

export default function App() {
  return (
    <div className="min-h-screen bg-white font-[Roboto,'Noto_Sans_CJK_SC',sans-serif]">
      <StatusBar />
      <Header />
      <Quote />
      <Notice />
      <Tabs />
      <Averages />
      <main className="flex gap-[21px] pr-8 pl-3">
        <LeftCharts />
        <ChipPanel />
      </main>
      <Banner />
      <div className="mt-5 h-[26px] border-t-2 border-[#dcdcdc]" />
      <BottomNav />
    </div>
  );
}
